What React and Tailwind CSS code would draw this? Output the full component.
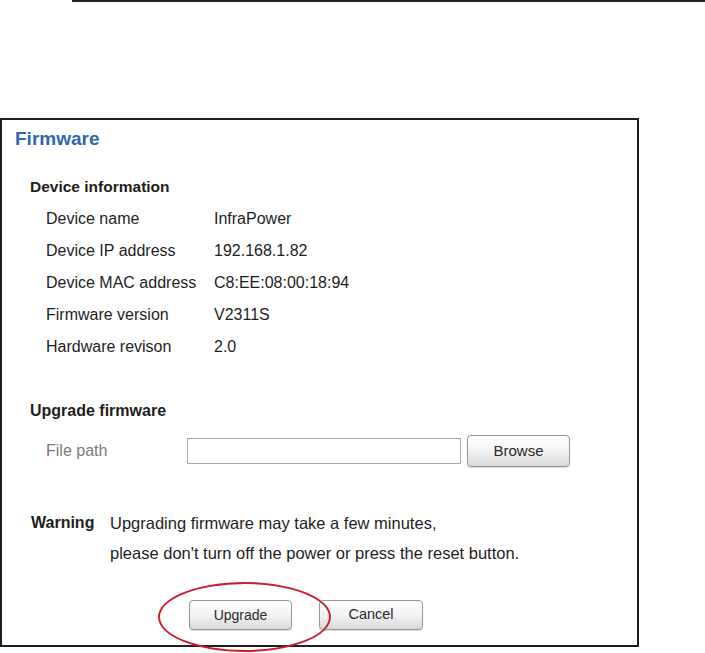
import React from 'react';

const deviceInfo = [
    { label: 'Device name', value: 'InfraPower' },
    { label: 'Device IP address', value: '192.168.1.82' },
    { label: 'Device MAC address', value: 'C8:EE:08:00:18:94' },
    { label: 'Firmware version', value: 'V2311S' },
    { label: 'Hardware revison', value: '2.0' },
];

const btn =
    'flex items-center justify-center border border-[#979797] rounded-[4px] bg-gradient-to-b from-white via-[#f3f3f3] to-[#d9d9d9] shadow-[0_1px_1px_rgba(0,0,0,0.15)] text-[#2a2a2a]';

const App = () => {
    return (
        <div
            className="relative w-[705px] h-[653px] overflow-hidden bg-white text-[#1e1e1e]"
            style={{ fontFamily: '"Liberation Sans", Arial, sans-serif' }}
        >
            {/* page rule */}
            <div className="ml-[72px] h-[2px] bg-[#231f20]" />

            {/* Firmware panel */}
            <div className="mt-[116px] w-[639px] h-[529px] border-2 border-[#1f1f1f] flex flex-col">
                <div className="h-[39px] flex items-center pl-[13px] text-[19px] font-bold text-[#2f68ab]">
                    Firmware
                </div>

                {/* Device information */}
                <div className="mt-[12px] h-[32px] flex items-center pl-[28px] text-[15.5px] font-bold">
                    Device information
                </div>
                <div className="flex flex-col pl-[44px] text-[16px]">
                    {deviceInfo.map(row => (
                        <div key={row.label} className="h-[32px] flex items-center">
                            <span className="w-[168px]">{row.label}</span>
                            <span>{row.value}</span>
                        </div>
                    ))}
                </div>

                {/* Upgrade firmware */}
                <div className="mt-[32px] h-[32px] flex items-center pl-[28px] text-[16px] font-bold">
                    Upgrade firmware
                </div>
                <div className="mt-[8px] h-[32px] flex items-center pl-[44px] text-[16px]">
                    <span className="w-[141px] text-[#7a7a7a]">File path</span>
                    <input
                        type="text"
                        className="w-[274px] h-[26px] border border-[#a9a9a9] bg-white outline-none"
                    />
                    <button className={`${btn} ml-[6px] w-[103px] h-[32px] text-[15px]`}>
                        Browse
                    </button>
                </div>

                {/* Warning */}
                <div className="mt-[41px] flex pl-[29px] text-[16px]">
                    <span className="w-[79px] h-[30px] flex items-center font-bold">Warning</span>
                    <div className="flex flex-col text-[16.5px]">
                        <span className="h-[30px] flex items-center">
                            Upgrading firmware may take a few minutes,
                        </span>
                        <span className="h-[30px] flex items-center">
                            please don't turn off the power or press the reset button.
                        </span>
                    </div>
                </div>

                {/* Actions */}
                <div className="mt-[32px] flex pl-[187px] gap-[27px]">
                    <button className={`${btn} w-[103px] h-[30px] text-[14px]`}>Upgrade</button>
                    <button className={`${btn} w-[104px] h-[30px] text-[14.5px]`}>Cancel</button>
                </div>
            </div>

            {/* highlight ring */}
            <div className="absolute left-[158px] top-[582px] w-[173px] h-[70px] rounded-[50%] border-2 border-[#c8202b] pointer-events-none" />
        </div>
    );
};

export default App;
